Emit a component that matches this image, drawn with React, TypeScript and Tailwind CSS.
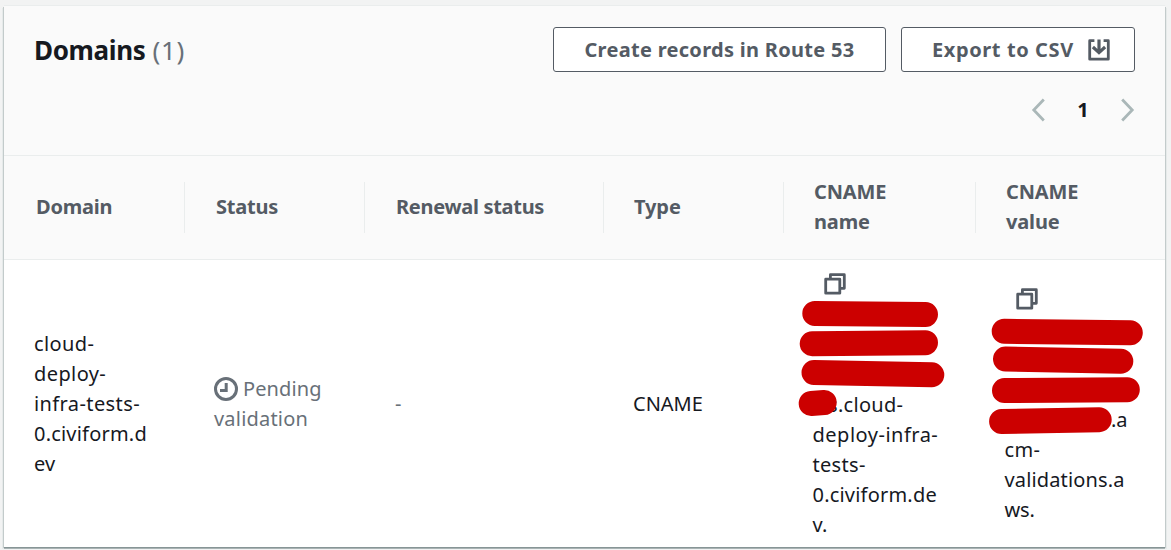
import React from "react";

type Bar = [number, number, number, number];

const columns = [
  { label: ["Domain"], width: "w-[181px]", text: "pl-8 tracking-[-0.2px]" },
  { label: ["Status"], width: "w-[180px]", text: "pl-[31px] tracking-[-0.2px]" },
  { label: ["Renewal status"], width: "w-[239px]", text: "pl-[31px] tracking-[-0.3px]" },
  { label: ["Type"], width: "w-[180px]", text: "pl-[30px] tracking-[-0.1px]" },
  { label: ["CNAME", "name"], width: "w-[192px]", text: "pl-[30px] tracking-[-0.15px]" },
  { label: ["CNAME", "value"], width: "w-[189px]", text: "pl-[30px] tracking-[-0.15px]" },
];

const nameBars: Bar[] = [
  [30.8, 53.5, 141.5, 54.5],
  [28.2, 83.7, 141.5, 82.7],
  [30, 112.5, 147.8, 114.8],
  [27.2, 143.5, 40.2, 142.5],
];

const valueBars: Bar[] = [
  [28.2, 71.3, 154.3, 72.8],
  [29.5, 99, 144.8, 101.2],
  [28.5, 130.6, 151.3, 129.7],
  [25.6, 161.5, 123.2, 159.7],
];

function Redactions({ bars }: { bars: Bar[] }) {
  return (
    <svg className="pointer-events-none absolute top-0 left-0 h-[287px] w-[192px]">
      {bars.map(([x1, y1, x2, y2]) => (
        <line key={y1} x1={x1} y1={y1} x2={x2} y2={y2} stroke="#cc0000" strokeWidth="25" strokeLinecap="round" />
      ))}
    </svg>
  );
}

function CopyIcon() {
  return (
    <svg width="22" height="22" viewBox="0 0 22 22" fill="none" stroke="#545b64" strokeWidth="2.8" strokeLinejoin="round">
      <path d="M6.4 5.5V1.7H20.3V15.3H17" />
      <path d="M1.7 6.2H15.8V20.2H1.7Z" />
    </svg>
  );
}

function ExportIcon() {
  return (
    <svg width="22" height="22" viewBox="0 0 22 22" fill="none" stroke="#545b64" strokeWidth="2.8" strokeLinejoin="round">
      <path d="M6.4 1.7H1.7V20.2H20.3V1.7H15.6" />
      <path d="M11 0.4V13.5M4.9 8L11 13.6L17.1 8" strokeWidth="3.2" strokeLinejoin="miter" />
    </svg>
  );
}

function ClockIcon() {
  return (
    <svg width="24" height="24" viewBox="0 0 24 24" fill="none" stroke="#687078">
      <circle cx="12" cy="12" r="10.5" strokeWidth="3" />
      <path d="M12.2 6V13.5H6" strokeWidth="3" />
    </svg>
  );
}

function Chevron({ d }: { d: string }) {
  return (
    <svg width="14" height="24" viewBox="0 0 14 24" fill="none" stroke="#aab7b8" strokeWidth="2.8">
      <path d={d} />
    </svg>
  );
}

export default function App() {
  return (
    <div className="h-[550px] w-[1171px] overflow-hidden bg-[#f2f3f3] pt-1.5 pl-1 font-['Noto_Sans','Open_Sans',sans-serif] text-xl leading-[30px] text-[#16191f]">
      <section className="flex h-[541px] w-[1161px] flex-col bg-white shadow-[0_1px_0_0_#879596,0_2px_0_0_#a9b3b4,1px_1px_0_0_#c3cbcb,-1px_1px_0_0_#c3cbcb,2px_2px_0_0_#e6eaea,-2px_2px_0_0_#e6eaea,0_-1px_0_0_#eaeded]">
        <header className="flex h-[150px] flex-col border-b border-[#eaeded] bg-[#fafafa] pt-[21px] pr-[30px] pl-[30px]">
          <div className="flex h-[45px] justify-between">
            <h2 className="flex gap-[7px] pt-[5px] text-[26px] leading-9 font-bold">
              <span className="tracking-[-0.35px]">Domains</span>
              <span className="font-normal tracking-[0.7px] text-[#687078]">(1)</span>
            </h2>
            <div className="flex gap-[15px] font-bold text-[#545b64]">
              <button className="flex w-[333px] items-center justify-center rounded-[3px] border border-[#545b64] bg-white">
                <span className="tracking-[0.3px] whitespace-nowrap">Create records in Route 53</span>
              </button>
              <button className="flex w-[234px] items-center justify-between rounded-[3px] border border-[#545b64] bg-white pr-6 pl-[30px]">
                <span className="tracking-[0.6px] whitespace-nowrap">Export to CSV</span>
                <ExportIcon />
              </button>
            </div>
          </div>
          <nav className="mt-[23px] flex items-center justify-end gap-8 font-bold">
            <Chevron d="M12.8 1.5L2.8 12L12.8 22.5" />
            <span className="w-3 text-center leading-[30px]">1</span>
            <Chevron d="M1.2 1.5L11.2 12L1.2 22.5" />
          </nav>
        </header>
        <div className="flex h-[104px] items-center border-b border-[#eaeded] bg-[#fafafa] font-bold text-[#545b64]">
          {columns.map((column, i) => (
            <div
              key={i}
              className={`${column.width} ${column.text} flex h-[51px] flex-col justify-center pb-0.5 ${i < 5 ? "border-r border-[#eaeded]" : ""}`}
            >
              {column.label.map((line) => (
                <div key={line}>{line}</div>
              ))}
            </div>
          ))}
        </div>
        <div className="flex h-[287px] items-center tracking-[0.2px]">
          <div className="w-[181px] pl-[30px]">
            <div className="tracking-[0.4px]">cloud-</div>
            <div className="tracking-[0.4px]">deploy-</div>
            <div className="tracking-[0.4px]">infra-tests-</div>
            <div>0.civiform.d</div>
            <div>ev</div>
          </div>
          <div className="w-[180px] pl-[29px] text-[#687078]">
            <div className="flex items-center gap-[5px]">
              <ClockIcon />
              <span className="tracking-[0.1px]">Pending</span>
            </div>
            <div>validation</div>
          </div>
          <div className="w-[239px] pl-[30px] text-[#687078]">-</div>
          <div className="w-[180px] pl-[29px] tracking-[0px]">CNAME</div>
          <div className="relative flex h-full w-[192px] flex-col justify-center pl-[28.5px]">
            <div className="flex h-[123px] items-start pt-[6px] pl-[11.5px]">
              <CopyIcon />
            </div>
            <div className="pl-[15.5px] tracking-[0.3px]">s.cloud-</div>
            <div className="tracking-[0.5px]">deploy-infra-</div>
            <div className="tracking-[0.3px]">tests-</div>
            <div>0.civiform.de</div>
            <div>v.</div>
            <Redactions bars={nameBars} />
          </div>
          <div className="relative flex h-full w-[189px] flex-col justify-center pl-[28.5px]">
            <div className="flex h-[123px] items-start pt-[6px] pl-[11.5px]">
              <CopyIcon />
            </div>
            <div className="pl-[106.5px] tracking-[-0.2px]">.a</div>
            <div className="tracking-[0.3px]">cm-</div>
            <div className="tracking-[0.15px]">validations.a</div>
            <div className="tracking-[-0.1px]">ws.</div>
            <Redactions bars={valueBars} />
          </div>
        </div>
      </section>
    </div>
  );
}
